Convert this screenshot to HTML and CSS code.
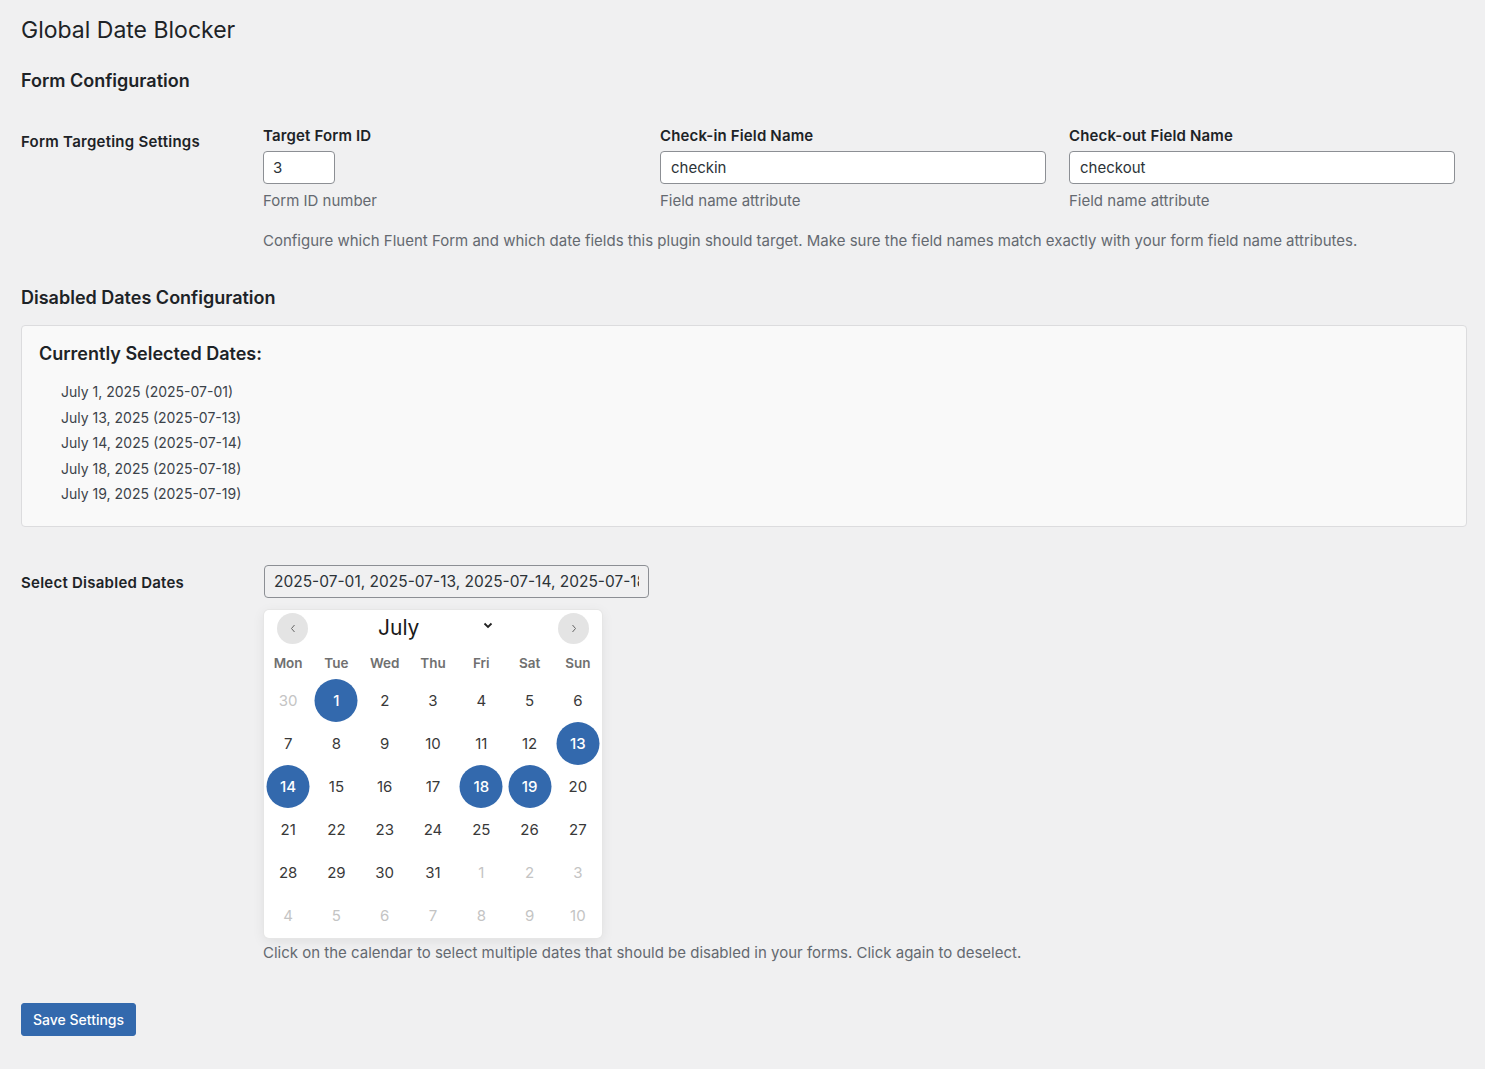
FILE: index.html
```html
<!DOCTYPE html>
<html lang="en">
<head>
<meta charset="utf-8">
<title>Global Date Blocker</title>
<link rel="stylesheet" href="styles.css">
</head>
<body>
<div class="wrap">
  <h1 class="page-title">Global Date Blocker</h1>

  <h2 class="section-title first">Form Configuration</h2>
  <div class="form-row row-targeting">
    <div class="row-label">Form Targeting Settings</div>
    <div class="row-field">
      <div class="field-grid">
        <div class="field">
          <label class="field-label">Target Form ID</label>
          <input class="text-input small" type="text" value="3">
          <p class="description">Form ID number</p>
        </div>
        <div class="field">
          <label class="field-label">Check-in Field Name</label>
          <input class="text-input wide" type="text" value="checkin">
          <p class="description">Field name attribute</p>
        </div>
        <div class="field">
          <label class="field-label">Check-out Field Name</label>
          <input class="text-input wide" type="text" value="checkout">
          <p class="description">Field name attribute</p>
        </div>
      </div>
      <p class="description note">Configure which Fluent Form and which date fields this plugin should target. Make sure the field names match exactly with your form field name attributes.</p>
    </div>
  </div>

  <h2 class="section-title second">Disabled Dates Configuration</h2>
  <div class="selected-box">
    <h3 class="box-title">Currently Selected Dates:</h3>
    <ul class="date-list">
      <li>July 1, 2025 (2025-07-01)</li>
      <li>July 13, 2025 (2025-07-13)</li>
      <li>July 14, 2025 (2025-07-14)</li>
      <li>July 18, 2025 (2025-07-18)</li>
      <li>July 19, 2025 (2025-07-19)</li>
    </ul>
  </div>

  <div class="form-row row-dates">
    <div class="row-label">Select Disabled Dates</div>
    <div class="row-field">
      <input class="text-input dates-input" type="text" readonly value="2025-07-01, 2025-07-13, 2025-07-14, 2025-07-18, 2025-07-19">
      <div class="calendar">
        <div class="cal-header">
          <span class="nav-btn">
            <svg width="6" height="9" viewBox="0 0 6 9"><path d="M4.5 1 L1.5 4.5 L4.5 8" fill="none" stroke="#666" stroke-width="1"/></svg>
          </span>
          <div class="month-select">
            <span class="month-name">July</span>
            <svg class="chev" width="10" height="7" viewBox="0 0 10 7"><path d="M1.5 1.5 L5 5 L8.5 1.5" fill="none" stroke="#222" stroke-width="1.8"/></svg>
          </div>
          <span class="nav-btn">
            <svg width="6" height="9" viewBox="0 0 6 9"><path d="M1.5 1 L4.5 4.5 L1.5 8" fill="none" stroke="#666" stroke-width="1"/></svg>
          </span>
        </div>
        <div class="weekdays">
          <span>Mon</span><span>Tue</span><span>Wed</span><span>Thu</span><span>Fri</span><span>Sat</span><span>Sun</span>
        </div>
        <div class="days">
          <span class="day other">30</span><span class="day sel">1</span><span class="day">2</span><span class="day">3</span><span class="day">4</span><span class="day">5</span><span class="day">6</span>
          <span class="day">7</span><span class="day">8</span><span class="day">9</span><span class="day">10</span><span class="day">11</span><span class="day">12</span><span class="day sel">13</span>
          <span class="day sel">14</span><span class="day">15</span><span class="day">16</span><span class="day">17</span><span class="day sel">18</span><span class="day sel">19</span><span class="day">20</span>
          <span class="day">21</span><span class="day">22</span><span class="day">23</span><span class="day">24</span><span class="day">25</span><span class="day">26</span><span class="day">27</span>
          <span class="day">28</span><span class="day">29</span><span class="day">30</span><span class="day">31</span><span class="day other">1</span><span class="day other">2</span><span class="day other">3</span>
          <span class="day other">4</span><span class="day other">5</span><span class="day other">6</span><span class="day other">7</span><span class="day other">8</span><span class="day other">9</span><span class="day other">10</span>
        </div>
      </div>
      <p class="description cal-note">Click on the calendar to select multiple dates that should be disabled in your forms. Click again to deselect.</p>
    </div>
  </div>

  <div class="submit-row">
    <button class="primary-btn" type="button">Save Settings</button>
  </div>
</div>
</body>
</html>
```

FILE: styles.css
```css
* { box-sizing: border-box; }

html, body {
  margin: 0;
  padding: 0;
  background: #f0f0f1;
}

body {
  font-family: "Inter", "Noto Sans", "Liberation Sans", sans-serif;
  font-size: 15px;
  color: #1d2327;
  line-height: 1.4;
}

.wrap {
  padding: 15px 18px 33px 21px;
}

.page-title {
  margin: 0;
  font-size: 23px;
  font-weight: 400;
  line-height: 30px;
  color: #1d2327;
}

.section-title {
  margin: 0;
  font-size: 18px;
  font-weight: 600;
  line-height: 24px;
  color: #1d2327;
}

.section-title.first { margin-top: 24px; }
.section-title.second { margin-top: 20px; }

.form-row {
  display: flex;
}

.row-label {
  width: 242px;
  flex: none;
  font-weight: 600;
  font-size: 15px;
  letter-spacing: 0.25px;
  line-height: 20px;
  color: #1d2327;
}

.row-targeting .row-label { padding-top: 21px; }
.row-dates .row-label { padding-top: 23px; }

.row-field {
  flex: 1;
  padding: 15px 10px 15px 0;
}

.row-targeting { margin-top: 18px; }
.row-dates { margin-top: 23px; }

.field-grid {
  display: grid;
  grid-template-columns: 377px 389px 1fr;
  column-gap: 20px;
}

.field {
  display: flex;
  flex-direction: column;
  align-items: flex-start;
}

.field-label {
  font-weight: 600;
  font-size: 15px;
  letter-spacing: 0.15px;
  line-height: 20px;
  margin-bottom: 5px;
  color: #1d2327;
}

.text-input {
  height: 33px;
  border: 1px solid #8c8f94;
  border-radius: 4px;
  background: #fff;
  padding: 0 10px;
  font-family: inherit;
  font-size: 15px;
  color: #2c3338;
}

.text-input.small { width: 72px; padding-left: 9px; }
.text-input.wide { width: 386px; }

.description {
  margin: 5px 0 0;
  font-size: 15px;
  line-height: 21px;
  color: #646970;
}

.field .description { margin-top: 6px; }

.description.note { margin-top: 19px; }

.selected-box {
  margin-top: 15px;
  background: #f9f9f9;
  border: 1px solid #dcdcde;
  border-radius: 4px;
  padding: 16px 17px 22px;
}

.box-title {
  margin: 0;
  font-size: 18px;
  font-weight: 600;
  line-height: 24px;
  color: #1d2327;
}

.date-list {
  list-style: none;
  margin: 16px 0 0 22px;
  padding: 0;
}

.date-list li {
  font-size: 14px;
  line-height: 19.6px;
  margin-bottom: 6px;
  color: #3c434a;
}

.date-list li:last-child { margin-bottom: 0; }

.dates-input {
  display: block;
  width: 385px;
  margin-left: 1px;
  background: #f0f0f1;
  font-size: 15.5px;
  padding: 0 9px;
}

.calendar {
  width: 338px;
  margin-top: 12px;
  margin-left: 1px;
  background: #fff;
  border-radius: 5px;
  box-shadow: 1px 0 0 #e6e6e6, -1px 0 0 #e6e6e6, 0 1px 0 #e6e6e6, 0 -1px 0 #e6e6e6, 0 3px 13px rgba(0, 0, 0, 0.08);
}

.cal-header {
  height: 36px;
  display: flex;
  align-items: center;
  justify-content: space-between;
  padding: 0 13px 0 13px;
}

.nav-btn {
  width: 31px;
  height: 31px;
  border-radius: 50%;
  background: #e4e4e4;
  display: flex;
  align-items: center;
  justify-content: center;
  margin-top: 2px;
}

.month-select {
  flex: 1;
  display: flex;
  align-items: center;
  padding-left: 70px;
}

.month-name {
  font-size: 21px;
  font-weight: 400;
  color: #1a1a1a;
  line-height: 24px;
}

.chev {
  margin-left: 64px;
  margin-top: -4px;
}

.weekdays {
  display: grid;
  grid-template-columns: repeat(7, 1fr);
  height: 33px;
  align-items: center;
}

.weekdays span {
  text-align: center;
  font-size: 13.5px;
  font-weight: 600;
  color: #707070;
  padding-top: 1px;
}

.days {
  display: grid;
  grid-template-columns: repeat(7, 1fr);
  padding-bottom: 1px;
}

.day {
  height: 43px;
  display: flex;
  align-items: center;
  justify-content: center;
  font-size: 15px;
  color: #393939;
  position: relative;
  z-index: 0;
}

.day.other { color: #c4c4c4; }

.day.sel {
  color: #fff;
  font-weight: 500;
}

.day.sel::before {
  content: "";
  position: absolute;
  width: 43px;
  height: 43px;
  border-radius: 50%;
  background: #3369ad;
  left: 50%;
  top: 0;
  transform: translateX(-50%);
  z-index: -1;
}

.description.cal-note { margin-top: 4px; }

.submit-row {
  margin-top: 25px;
}

.primary-btn {
  height: 33px;
  padding: 0 11px;
  background: #3369ad;
  border: 1px solid #3369ad;
  border-radius: 3px;
  color: #fff;
  font-family: inherit;
  font-size: 14px;
  font-weight: 500;
  cursor: pointer;
}
```
